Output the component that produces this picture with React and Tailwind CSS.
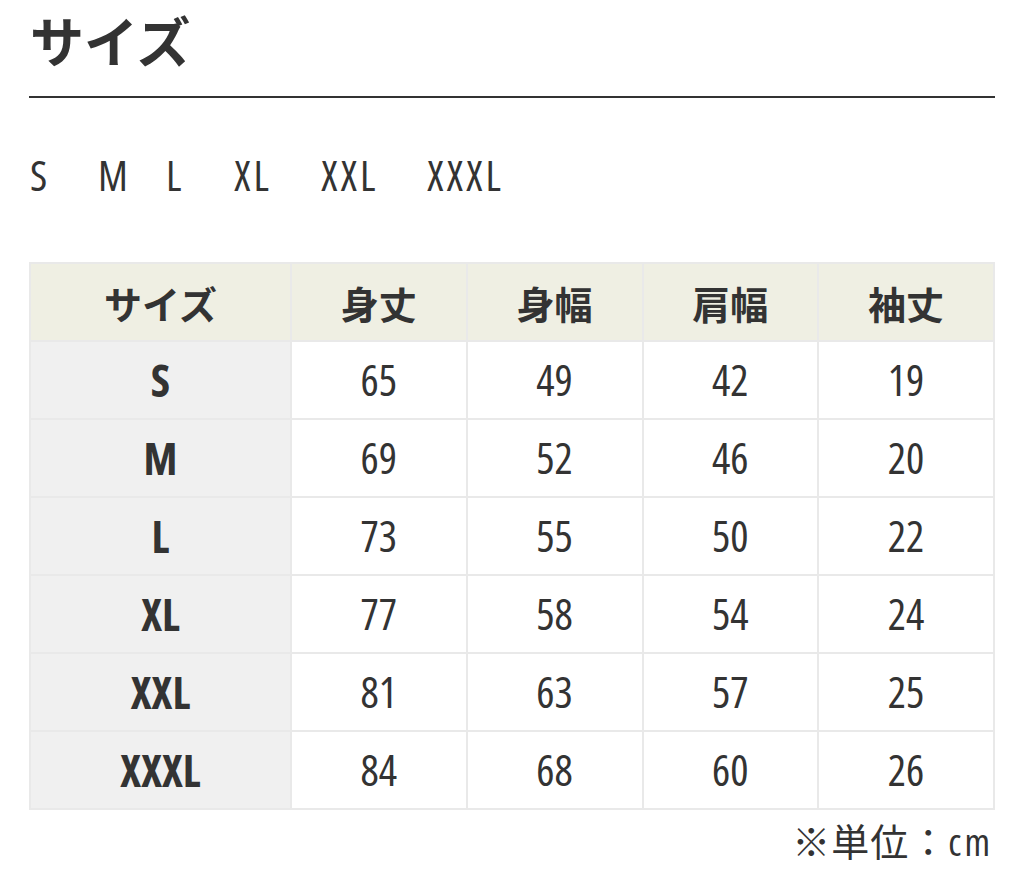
import React from "react";

const sizes = [
  { s: "S", w: "w-[19px]" },
  { s: "M", w: "w-[19px]" },
  { s: "L", w: "w-[19px]" },
  { s: "XL", w: "w-[38px]" },
  { s: "XXL", w: "w-[57px]" },
  { s: "XXXL", w: "w-[76px]" },
];
const heads = ["サイズ", "身丈", "身幅", "肩幅", "袖丈"];
const rows = [
  ["S", 65, 49, 42, 19],
  ["M", 69, 52, 46, 20],
  ["L", 73, 55, 50, 22],
  ["XL", 77, 58, 54, 24],
  ["XXL", 81, 63, 57, 25],
  ["XXXL", 84, 68, 60, 26],
];

export default function App() {
  return (
    <div className="w-[1024px] h-[890px] bg-white text-[#333] px-[29px] pt-[4px] [font-family:'Open_Sans','Noto_Sans_CJK_JP',sans-serif] [font-stretch:75%]">
      <h1 className="text-[54px] font-bold leading-[72px] pl-[1px] [font-family:'Noto_Sans_CJK_JP',sans-serif]">
        サイズ
      </h1>
      <div className="mt-[20px] h-[2px] bg-[#333] w-[966px]" />

      {/* size list */}
      <div className="mt-[49px] flex gap-[49px] text-[42px] leading-[56px] pl-[1px] tracking-[3px]">
        {sizes.map((x) => (
          <span key={x.s} className={x.w + " whitespace-nowrap"}>
            {x.s}
          </span>
        ))}
      </div>

      <table className="mt-[59px] w-[966px] border-collapse border-2 border-[#e9e9e9] table-fixed">
        <colgroup>
          <col className="w-[261px]" />
          <col />
          <col />
          <col />
          <col />
        </colgroup>
        <thead>
          <tr className="h-[78px] bg-[#efefe3]">
            {heads.map((h) => (
              <th key={h} className="border-2 border-[#e9e9e9] text-[38px] font-bold [font-family:'Noto_Sans_CJK_JP',sans-serif]">
                {h}
              </th>
            ))}
          </tr>
        </thead>
        <tbody>
          {rows.map((r) => (
            <tr key={r[0]} className="h-[78px]">
              {r.map((c, i) => (
                <td
                  key={i}
                  className={
                    i === 0
                      ? "border-2 border-[#e9e9e9] text-center text-[44px] bg-[#f0f0f0] font-bold"
                      : "border-2 border-[#e9e9e9] text-center text-[43px] bg-white"
                  }
                >
                  {c}
                </td>
              ))}
            </tr>
          ))}
        </tbody>
      </table>

      <div className="w-[966px] text-right text-[38px] leading-[44px] mt-[9px] pr-[2px] tracking-[1px]">
        ※単位：<span className="tracking-[3px]">cm</span>
      </div>
    </div>
  );
}
